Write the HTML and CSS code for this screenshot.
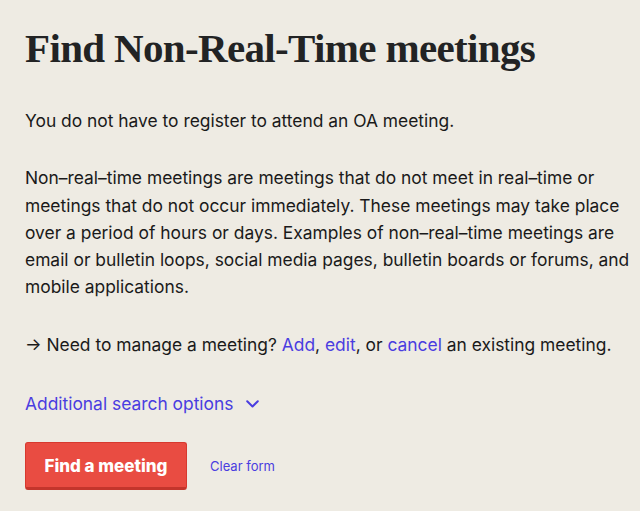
FILE: index.html
```html
<!DOCTYPE html>
<html lang="en">
<head>
    <meta charset="UTF-8">
    <meta name="viewport" content="width=device-width, initial-scale=1.0">
    <title>Find Non-Real-Time meetings</title>
    <link rel="stylesheet" href="styles.css">
</head>
<body>
    <div class="container">
        <h1>Find Non-Real-Time meetings</h1>

        <p>You do not have to register to attend an OA meeting.</p>

        <p>Non&#8211;real&#8211;time meetings are meetings that do not meet in real&#8211;time or meetings that do not occur immediately. These meetings may take place over a period of hours or days. Examples of non&#8211;real&#8211;time meetings are email or bulletin loops, social media pages, bulletin boards or forums, and mobile applications.</p>

        <p>&#8594; Need to manage a meeting? <a href="#">Add</a>, <a href="#">edit</a>, or <a href="#">cancel</a> an existing meeting.</p>

        <a href="#" class="options-toggle">
            Additional search options
            <svg width="13" height="8" viewBox="0 0 13 8" fill="none">
                <path d="M1.2 1.2 L6.5 6.5 L11.8 1.2" stroke="currentColor" stroke-width="2" stroke-linecap="round" stroke-linejoin="round"/>
            </svg>
        </a>

        <div class="actions">
            <button id="findBtn">Find a meeting</button>
            <a href="#" class="clear-link">Clear form</a>
        </div>
    </div>
</body>
</html>
```

FILE: styles.css
```css
* {
    margin: 0;
    padding: 0;
    box-sizing: border-box;
}

body {
    background-color: #eeebe3;
    color: #1a1a1a;
    font-family: Inter, "Liberation Sans", Arial, sans-serif;
}

.container {
    padding: 24px 10px 20px 25px;
}

h1 {
    font-family: "Liberation Serif", "Times New Roman", serif;
    font-weight: bold;
    font-size: 41px;
    letter-spacing: -0.65px;
    line-height: 48px;
    color: #222324;
    margin-bottom: 35px;
}

p {
    font-size: 17.4px;
    line-height: 27.25px;
    margin-bottom: 30px;
}

a {
    color: #4a3de0;
    text-decoration: none;
}

.options-toggle {
    display: inline-flex;
    align-items: center;
    gap: 13px;
    font-size: 17.4px;
    line-height: 27px;
    margin-top: 2px;
}

.options-toggle svg {
    margin-top: 2px;
}

.actions {
    display: flex;
    align-items: center;
    gap: 23px;
    margin-top: 25px;
}

button {
    width: 162px;
    height: 48px;
    background-color: #e94c42;
    color: white;
    border: 1px solid #d7392f;
    border-bottom: 3px solid #c3352c;
    border-radius: 3px;
    font-family: Inter, "Liberation Sans", Arial, sans-serif;
    font-weight: 800;
    font-size: 17px;
    padding-top: 2px;
    cursor: pointer;
}

.clear-link {
    font-size: 13px;
}
```
